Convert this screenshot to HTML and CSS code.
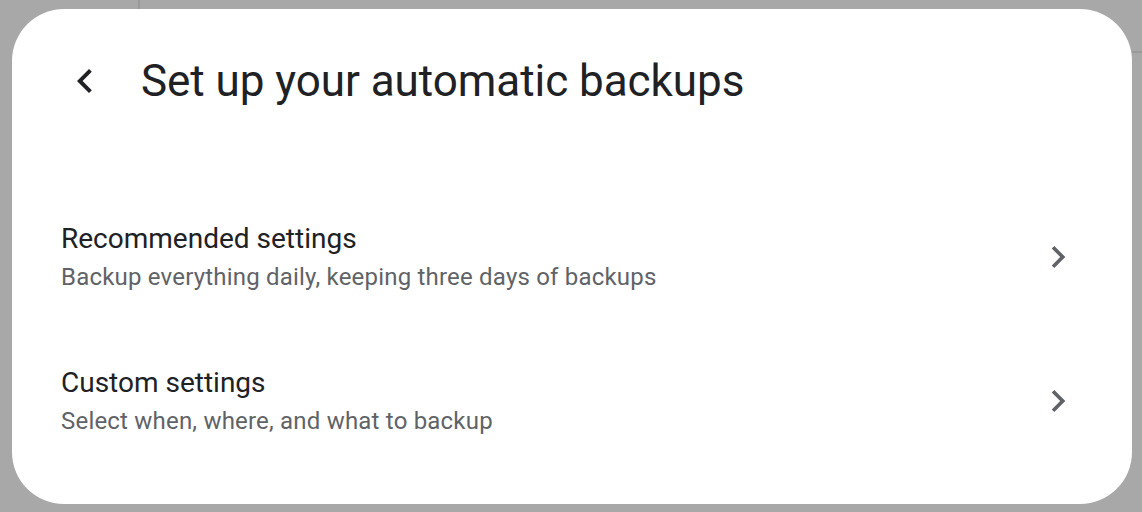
FILE: index.html
```html
<!DOCTYPE html>
<html>
 <head>
  <title>Set up your automatic backups</title>
  <link rel="stylesheet" href="styles.css">
 </head>
 <body>
   <div class="dialog">
     <div class="header">
       <svg class="back" width="24" height="24" viewBox="0 0 24 24"><path d="M15.4 7.4 14 6l-6 6 6 6 1.4-1.4L10.8 12z" fill="#202124"/></svg>
       <h1 class="title">Set up your automatic backups</h1>
     </div>
     <div class="list">
       <div class="item">
         <div class="text">
           <div class="label">Recommended settings</div>
           <div class="desc">Backup everything daily, keeping three days of backups</div>
         </div>
         <svg class="chev" width="24" height="24" viewBox="0 0 24 24"><path d="M8.6 16.6 10 18l6-6-6-6-1.4 1.4 4.6 4.6z" fill="#5f6368"/></svg>
       </div>
       <div class="item">
         <div class="text">
           <div class="label">Custom settings</div>
           <div class="desc">Select when, where, and what to backup</div>
         </div>
         <svg class="chev" width="24" height="24" viewBox="0 0 24 24"><path d="M8.6 16.6 10 18l6-6-6-6-1.4 1.4 4.6 4.6z" fill="#5f6368"/></svg>
       </div>
     </div>
   </div>
 </body>
</html>
```
FILE: styles.css
```css
html, body { margin: 0; height: 100%; }
body
{
 background-color: #a8a8a8;
 background-image:
  linear-gradient(#9a9a9a, #9a9a9a),
  linear-gradient(#9a9a9a, #9a9a9a);
 background-size: 2px 9px, 10px 2px;
 background-position: 138px 0, 1132px 51px;
 background-repeat: no-repeat;
 font-family: Roboto, "Noto Sans", sans-serif;
 padding: 9px 10px 8px 12px;
 box-sizing: border-box;
}
.dialog
{
 background: #fff;
 border-radius: 52px;
 height: 495px;
 box-sizing: border-box;
 padding: 46px 52px 0 49px;
}
.header { display: flex; align-items: center; height: 52px; }
.back { width: 48px; height: 48px; margin-right: 32px; }
.title
{
 margin: 0;
 font-size: 44px;
 line-height: 52px;
 font-weight: 400;
 letter-spacing: -0.05px;
 color: #202124;
}
/* header ends at y=107, first row starts at y=185 */
.list { margin-top: 78px; }
.item
{
 display: flex;
 align-items: center;
 justify-content: space-between;
 height: 144px;
}
.label { font-size: 28px; line-height: 34px; color: #202124; }
.desc
{
 font-size: 24px;
 line-height: 30px;
 letter-spacing: 0.2px;
 color: #5f6368;
 margin-top: 6px;
}
.chev { width: 44px; height: 44px; }
```
